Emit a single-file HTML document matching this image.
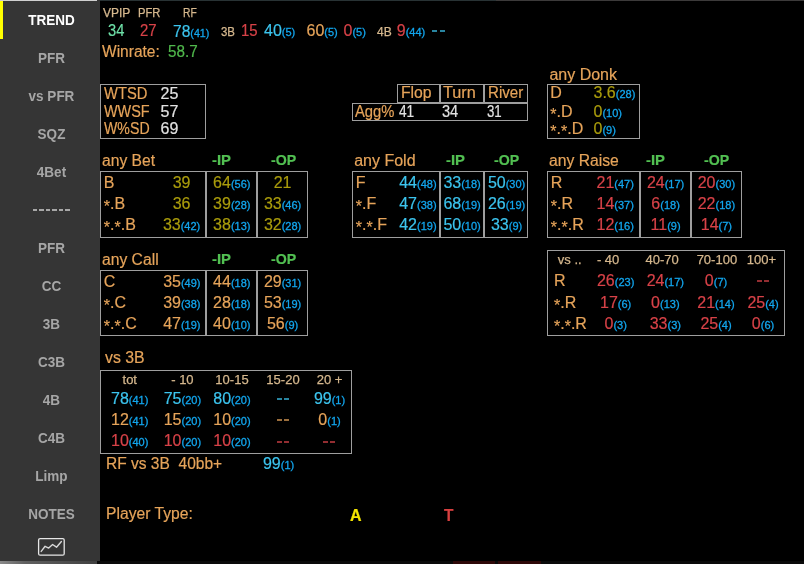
<!DOCTYPE html>
<html><head><meta charset="utf-8"><style>
html,body{margin:0;padding:0;width:804px;height:564px;overflow:hidden;background:#000}
body{position:relative;font-family:"Liberation Sans",sans-serif}
#w{position:absolute;left:0;top:0;width:804px;height:564px;will-change:transform}
.t{position:absolute;white-space:nowrap;line-height:20px;-webkit-text-stroke-width:0.2px}
.b{position:absolute;border:1px solid #9e9e9e}
.sb{position:absolute;left:0;top:0;width:100px;height:561px;background:#353535}
.si{position:absolute;left:0;width:103px;text-align:center;font-weight:bold;font-size:15px;line-height:20px;transform:scaleX(0.9)}
</style></head><body><div id="w">
<div class="sb">
<div style="position:absolute;left:0;top:0;width:97px;height:1px;background:#d0d0d0"></div>
<div style="position:absolute;left:0;top:1px;width:3px;height:38px;background:#ffff00"></div>
<div class="si" style="top:10px;color:#ffffff">TREND</div><div class="si" style="top:48px;color:#a6a6a6">PFR</div><div class="si" style="top:86px;color:#a6a6a6">vs PFR</div><div class="si" style="top:124px;color:#a6a6a6">SQZ</div><div class="si" style="top:162px;color:#a6a6a6">4Bet</div><div style="position:absolute;left:32.90px;top:209px;width:4.5px;height:2px;background:#a8a8a8"></div><div style="position:absolute;left:39.35px;top:209px;width:4.5px;height:2px;background:#a8a8a8"></div><div style="position:absolute;left:45.80px;top:209px;width:4.5px;height:2px;background:#a8a8a8"></div><div style="position:absolute;left:52.25px;top:209px;width:4.5px;height:2px;background:#a8a8a8"></div><div style="position:absolute;left:58.70px;top:209px;width:4.5px;height:2px;background:#a8a8a8"></div><div style="position:absolute;left:65.15px;top:209px;width:4.5px;height:2px;background:#a8a8a8"></div><div class="si" style="top:238px;color:#a6a6a6">PFR</div><div class="si" style="top:276px;color:#a6a6a6">CC</div><div class="si" style="top:314px;color:#a6a6a6">3B</div><div class="si" style="top:352px;color:#a6a6a6">C3B</div><div class="si" style="top:390px;color:#a6a6a6">4B</div><div class="si" style="top:428px;color:#a6a6a6">C4B</div><div class="si" style="top:466px;color:#a6a6a6">Limp</div><div class="si" style="top:504px;color:#a6a6a6">NOTES</div>
<svg style="position:absolute;left:37px;top:537px" width="30" height="20" viewBox="0 0 30 20">
<rect x="1.6" y="1.6" width="25.6" height="16.6" rx="1.5" fill="none" stroke="#e6e6e6" stroke-width="1.3"/>
<polyline points="4.2,14.4 8.1,9.3 11.7,11.1 15.6,7.5 19.5,10.2 24.4,4.5" fill="none" stroke="#d8d8d8" stroke-width="1.4" stroke-linecap="round" stroke-linejoin="round"/>
</svg>
</div>
<div style="position:absolute;left:100px;top:0;width:396px;height:1px;background:#283234"></div><div style="position:absolute;left:496px;top:0;width:308px;height:1px;background:#3c3a3a"></div>
<div style="position:absolute;left:0;top:561px;width:97px;height:3px;background:linear-gradient(90deg,#8a8a8a 0,#606060 25px,#4c4c4c 70px,#404040 97px)"></div>
<div style="position:absolute;left:97px;top:561px;width:707px;height:3px;background:#0a0a0a"></div>
<div style="position:absolute;left:453px;top:561px;width:42px;height:3px;background:#2e0808"></div>
<div style="position:absolute;left:498px;top:561px;width:43px;height:3px;background:#2e0808"></div>
<div class="t" style="left:103.00px;top:2px;-webkit-text-stroke:0.25px #d6b88e"><span style="font-size:12px;color:#d6b88e">VPIP</span></div><div class="t" style="left:137.90px;top:2px;transform:scaleX(0.9333);transform-origin:0 0;-webkit-text-stroke:0.25px #d6b88e"><span style="font-size:12px;color:#d6b88e">PFR</span></div><div class="t" style="left:183.30px;top:2px;transform:scaleX(0.8562);transform-origin:0 0;-webkit-text-stroke:0.25px #d6b88e"><span style="font-size:12px;color:#d6b88e">RF</span></div><div class="t" style="left:108.00px;top:21px;transform:scaleX(0.9167);transform-origin:0 0;"><span style="font-size:16px;color:#6ee0a8">34</span></div><div class="t" style="left:140.40px;top:21px;transform:scaleX(0.9333);transform-origin:0 0;"><span style="font-size:16px;color:#d84248">27</span></div><div class="t" style="left:172.50px;top:22px;transform:scaleX(0.9732);transform-origin:0 0;"><span style="font-size:16px;color:#3cc4ee">78</span><span style="font-size:11px;color:#12a6ee;-webkit-text-stroke:0.3px #12a6ee">(41)</span></div><div class="t" style="left:220.50px;top:21px;transform:scaleX(0.9533);transform-origin:0 0;-webkit-text-stroke:0.25px #d6b88e"><span style="font-size:12px;color:#d6b88e">3B</span></div><div class="t" style="left:241.00px;top:21px;transform:scaleX(0.9333);transform-origin:0 0;"><span style="font-size:16px;color:#d84248">15</span></div><div class="t" style="left:264.00px;top:21px;"><span style="font-size:16px;color:#3cc4ee">40</span><span style="font-size:11px;color:#12a6ee;-webkit-text-stroke:0.3px #12a6ee">(5)</span></div><div class="t" style="left:306.50px;top:21px;"><span style="font-size:16px;color:#e6a45a">60</span><span style="font-size:11px;color:#12a6ee;-webkit-text-stroke:0.3px #12a6ee">(5)</span></div><div class="t" style="left:343.50px;top:21px;"><span style="font-size:16px;color:#d84248">0</span><span style="font-size:11px;color:#12a6ee;-webkit-text-stroke:0.3px #12a6ee">(5)</span></div><div class="t" style="left:377.00px;top:21px;-webkit-text-stroke:0.25px #d6b88e"><span style="font-size:12px;color:#d6b88e">4B</span></div><div class="t" style="left:396.80px;top:21px;"><span style="font-size:16px;color:#d84248">9</span><span style="font-size:11px;color:#12a6ee;-webkit-text-stroke:0.3px #12a6ee">(44)</span></div><div style="position:absolute;left:432.3px;top:30px;width:5px;height:2px;background:#3cc4ee;opacity:0.68"></div><div style="position:absolute;left:439.5px;top:30px;width:5px;height:2px;background:#3cc4ee;opacity:0.68"></div><div class="t" style="left:101.50px;top:42px;transform:scaleX(0.9700);transform-origin:0 0;"><span style="font-size:16px;color:#e6a45a">Winrate:</span></div><div class="t" style="left:167.80px;top:42px;transform:scaleX(0.9516);transform-origin:0 0;"><span style="font-size:16px;color:#50b84c">58.7</span></div><div class="b" style="left:100px;top:84px;width:104px;height:53px;border-color:#9e9e9e"></div><div class="t" style="left:103.50px;top:84px;transform:scaleX(0.9213);transform-origin:0 0;"><span style="font-size:16px;color:#e6a45a">WTSD</span></div><div class="t" style="left:160.50px;top:84px;"><span style="font-size:16px;color:#e2e2e2">25</span></div><div class="t" style="left:103.50px;top:102px;transform:scaleX(0.9020);transform-origin:0 0;"><span style="font-size:16px;color:#e6a45a">WWSF</span></div><div class="t" style="left:160.50px;top:102px;"><span style="font-size:16px;color:#e2e2e2">57</span></div><div class="t" style="left:103.50px;top:119px;transform:scaleX(0.8846);transform-origin:0 0;"><span style="font-size:16px;color:#e6a45a">W%SD</span></div><div class="t" style="left:160.50px;top:119px;"><span style="font-size:16px;color:#e2e2e2">69</span></div><div class="b" style="left:397px;top:84px;width:41px;height:17px;border-color:#9e9e9e"></div><div class="b" style="left:440px;top:84px;width:42px;height:17px;border-color:#9e9e9e"></div><div class="b" style="left:484px;top:84px;width:42px;height:17px;border-color:#9e9e9e"></div><div class="t" style="left:400.50px;top:83px;transform:scaleX(0.9839);transform-origin:0 0;"><span style="font-size:16px;color:#e6a45a">Flop</span></div><div class="t" style="left:442.70px;top:83px;transform:scaleX(1.0156);transform-origin:0 0;"><span style="font-size:16px;color:#e6a45a">Turn</span></div><div class="t" style="left:487.50px;top:83px;transform:scaleX(0.9421);transform-origin:0 0;"><span style="font-size:16px;color:#e6a45a">River</span></div><div class="b" style="left:352px;top:103px;width:174px;height:16px;border-color:#9e9e9e"></div><div class="t" style="left:355.00px;top:102px;transform:scaleX(0.9233);transform-origin:0 0;"><span style="font-size:16px;color:#e6a45a">Agg%</span></div><div class="t" style="left:399.00px;top:102px;transform:scaleX(0.8556);transform-origin:0 0;"><span style="font-size:16px;color:#e2e2e2">41</span></div><div class="t" style="left:442.00px;top:102px;transform:scaleX(0.9111);transform-origin:0 0;"><span style="font-size:16px;color:#e2e2e2">34</span></div><div class="t" style="left:486.70px;top:102px;transform:scaleX(0.8278);transform-origin:0 0;"><span style="font-size:16px;color:#e2e2e2">31</span></div><div class="t" style="left:549.40px;top:65px;"><span style="font-size:16px;color:#e6a45a">any Donk</span></div><div class="b" style="left:547px;top:84px;width:91px;height:53px;border-color:#9e9e9e"></div><div class="t" style="left:550.30px;top:83px;"><span style="font-size:16px;color:#e6a45a">D</span></div><div class="t" style="left:593.50px;top:83px;"><span style="font-size:16px;color:#aa9c0c">3.6</span><span style="font-size:11px;color:#12a6ee;-webkit-text-stroke:0.3px #12a6ee">(28)</span></div><div class="t" style="left:550.30px;top:102px;"><span style="font-size:16px;color:#e6a45a"><span style="position:relative;top:2.5px">*</span>.D</span></div><div class="t" style="left:593.50px;top:102px;"><span style="font-size:16px;color:#aa9c0c">0</span><span style="font-size:11px;color:#12a6ee;-webkit-text-stroke:0.3px #12a6ee">(10)</span></div><div class="t" style="left:550.30px;top:119px;"><span style="font-size:16px;color:#e6a45a"><span style="position:relative;top:2.5px">*</span>.<span style="position:relative;top:2.5px">*</span>.D</span></div><div class="t" style="left:593.50px;top:119px;"><span style="font-size:16px;color:#aa9c0c">0</span><span style="font-size:11px;color:#12a6ee;-webkit-text-stroke:0.3px #12a6ee">(9)</span></div><div class="t" style="left:102.20px;top:151px;transform:scaleX(0.9782);transform-origin:0 0;"><span style="font-size:16px;color:#e6a45a">any Bet</span></div><div class="t" style="left:212.11px;top:150px;transform:scaleX(0.9895);transform-origin:0 0;"><span style="font-size:15px;color:#52c052;font-weight:bold">-IP</span></div><div class="t" style="left:270.60px;top:150px;transform:scaleX(0.9444);transform-origin:0 0;"><span style="font-size:15px;color:#52c052;font-weight:bold">-OP</span></div><div class="b" style="left:100px;top:171px;width:104px;height:65px;border-color:#9e9e9e"></div><div class="b" style="left:206px;top:171px;width:49px;height:65px;border-color:#9e9e9e"></div><div class="b" style="left:257px;top:171px;width:49px;height:65px;border-color:#9e9e9e"></div><div class="t" style="left:103.80px;top:173px;"><span style="font-size:16px;color:#e6a45a">B</span></div><div class="t" style="left:172.69px;top:173px;"><span style="font-size:16px;color:#aa9c0c">39</span></div><div class="t" style="left:213.11px;top:173px;"><span style="font-size:16px;color:#aa9c0c">64</span><span style="font-size:11px;color:#12a6ee;-webkit-text-stroke:0.3px #12a6ee">(56)</span></div><div class="t" style="left:273.69px;top:173px;"><span style="font-size:16px;color:#aa9c0c">21</span></div><div class="t" style="left:103.80px;top:194px;"><span style="font-size:16px;color:#e6a45a"><span style="position:relative;top:2.5px">*</span>.B</span></div><div class="t" style="left:172.69px;top:194px;"><span style="font-size:16px;color:#aa9c0c">36</span></div><div class="t" style="left:213.11px;top:194px;"><span style="font-size:16px;color:#aa9c0c">39</span><span style="font-size:11px;color:#12a6ee;-webkit-text-stroke:0.3px #12a6ee">(28)</span></div><div class="t" style="left:263.91px;top:194px;"><span style="font-size:16px;color:#aa9c0c">33</span><span style="font-size:11px;color:#12a6ee;-webkit-text-stroke:0.3px #12a6ee">(46)</span></div><div class="t" style="left:103.80px;top:215px;"><span style="font-size:16px;color:#e6a45a"><span style="position:relative;top:2.5px">*</span>.<span style="position:relative;top:2.5px">*</span>.B</span></div><div class="t" style="left:162.91px;top:215px;"><span style="font-size:16px;color:#aa9c0c">33</span><span style="font-size:11px;color:#12a6ee;-webkit-text-stroke:0.3px #12a6ee">(42)</span></div><div class="t" style="left:213.11px;top:215px;"><span style="font-size:16px;color:#aa9c0c">38</span><span style="font-size:11px;color:#12a6ee;-webkit-text-stroke:0.3px #12a6ee">(13)</span></div><div class="t" style="left:263.91px;top:215px;"><span style="font-size:16px;color:#aa9c0c">32</span><span style="font-size:11px;color:#12a6ee;-webkit-text-stroke:0.3px #12a6ee">(28)</span></div><div class="t" style="left:354.20px;top:151px;"><span style="font-size:16px;color:#e6a45a">any Fold</span></div><div class="t" style="left:445.71px;top:150px;transform:scaleX(0.9895);transform-origin:0 0;"><span style="font-size:15px;color:#52c052;font-weight:bold">-IP</span></div><div class="t" style="left:493.90px;top:150px;transform:scaleX(0.9444);transform-origin:0 0;"><span style="font-size:15px;color:#52c052;font-weight:bold">-OP</span></div><div class="b" style="left:352px;top:171px;width:86px;height:65px;border-color:#9e9e9e"></div><div class="b" style="left:440px;top:171px;width:42px;height:65px;border-color:#9e9e9e"></div><div class="b" style="left:484px;top:171px;width:42px;height:65px;border-color:#9e9e9e"></div><div class="t" style="left:355.80px;top:173px;"><span style="font-size:16px;color:#e6a45a">F</span></div><div class="t" style="left:399.21px;top:173px;"><span style="font-size:16px;color:#3cc4ee">44</span><span style="font-size:11px;color:#12a6ee;-webkit-text-stroke:0.3px #12a6ee">(48)</span></div><div class="t" style="left:443.41px;top:173px;"><span style="font-size:16px;color:#3cc4ee">33</span><span style="font-size:11px;color:#12a6ee;-webkit-text-stroke:0.3px #12a6ee">(18)</span></div><div class="t" style="left:487.91px;top:173px;"><span style="font-size:16px;color:#3cc4ee">50</span><span style="font-size:11px;color:#12a6ee;-webkit-text-stroke:0.3px #12a6ee">(30)</span></div><div class="t" style="left:355.80px;top:194px;"><span style="font-size:16px;color:#e6a45a"><span style="position:relative;top:2.5px">*</span>.F</span></div><div class="t" style="left:399.21px;top:194px;"><span style="font-size:16px;color:#3cc4ee">47</span><span style="font-size:11px;color:#12a6ee;-webkit-text-stroke:0.3px #12a6ee">(38)</span></div><div class="t" style="left:443.41px;top:194px;"><span style="font-size:16px;color:#3cc4ee">68</span><span style="font-size:11px;color:#12a6ee;-webkit-text-stroke:0.3px #12a6ee">(19)</span></div><div class="t" style="left:487.91px;top:194px;"><span style="font-size:16px;color:#3cc4ee">26</span><span style="font-size:11px;color:#12a6ee;-webkit-text-stroke:0.3px #12a6ee">(19)</span></div><div class="t" style="left:355.80px;top:215px;"><span style="font-size:16px;color:#e6a45a"><span style="position:relative;top:2.5px">*</span>.<span style="position:relative;top:2.5px">*</span>.F</span></div><div class="t" style="left:399.21px;top:215px;"><span style="font-size:16px;color:#3cc4ee">42</span><span style="font-size:11px;color:#12a6ee;-webkit-text-stroke:0.3px #12a6ee">(19)</span></div><div class="t" style="left:443.41px;top:215px;"><span style="font-size:16px;color:#3cc4ee">50</span><span style="font-size:11px;color:#12a6ee;-webkit-text-stroke:0.3px #12a6ee">(10)</span></div><div class="t" style="left:490.98px;top:215px;"><span style="font-size:16px;color:#3cc4ee">33</span><span style="font-size:11px;color:#12a6ee;-webkit-text-stroke:0.3px #12a6ee">(9)</span></div><div class="t" style="left:549.20px;top:151px;transform:scaleX(0.9817);transform-origin:0 0;"><span style="font-size:16px;color:#e6a45a">any Raise</span></div><div class="t" style="left:645.91px;top:150px;transform:scaleX(0.9895);transform-origin:0 0;"><span style="font-size:15px;color:#52c052;font-weight:bold">-IP</span></div><div class="t" style="left:703.90px;top:150px;transform:scaleX(0.9444);transform-origin:0 0;"><span style="font-size:15px;color:#52c052;font-weight:bold">-OP</span></div><div class="b" style="left:547px;top:171px;width:91px;height:65px;border-color:#9e9e9e"></div><div class="b" style="left:640px;top:171px;width:49px;height:65px;border-color:#9e9e9e"></div><div class="b" style="left:691px;top:171px;width:49px;height:65px;border-color:#9e9e9e"></div><div class="t" style="left:550.80px;top:173px;"><span style="font-size:16px;color:#e6a45a">R</span></div><div class="t" style="left:596.51px;top:173px;"><span style="font-size:16px;color:#d84248">21</span><span style="font-size:11px;color:#12a6ee;-webkit-text-stroke:0.3px #12a6ee">(47)</span></div><div class="t" style="left:646.91px;top:173px;"><span style="font-size:16px;color:#d84248">24</span><span style="font-size:11px;color:#12a6ee;-webkit-text-stroke:0.3px #12a6ee">(17)</span></div><div class="t" style="left:697.71px;top:173px;"><span style="font-size:16px;color:#d84248">20</span><span style="font-size:11px;color:#12a6ee;-webkit-text-stroke:0.3px #12a6ee">(30)</span></div><div class="t" style="left:550.80px;top:194px;"><span style="font-size:16px;color:#e6a45a"><span style="position:relative;top:2.5px">*</span>.R</span></div><div class="t" style="left:596.51px;top:194px;"><span style="font-size:16px;color:#d84248">14</span><span style="font-size:11px;color:#12a6ee;-webkit-text-stroke:0.3px #12a6ee">(37)</span></div><div class="t" style="left:651.37px;top:194px;"><span style="font-size:16px;color:#d84248">6</span><span style="font-size:11px;color:#12a6ee;-webkit-text-stroke:0.3px #12a6ee">(18)</span></div><div class="t" style="left:697.71px;top:194px;"><span style="font-size:16px;color:#d84248">22</span><span style="font-size:11px;color:#12a6ee;-webkit-text-stroke:0.3px #12a6ee">(18)</span></div><div class="t" style="left:550.80px;top:215px;"><span style="font-size:16px;color:#e6a45a"><span style="position:relative;top:2.5px">*</span>.<span style="position:relative;top:2.5px">*</span>.R</span></div><div class="t" style="left:596.51px;top:215px;"><span style="font-size:16px;color:#d84248">12</span><span style="font-size:11px;color:#12a6ee;-webkit-text-stroke:0.3px #12a6ee">(16)</span></div><div class="t" style="left:650.57px;top:215px;"><span style="font-size:16px;color:#d84248">11</span><span style="font-size:11px;color:#12a6ee;-webkit-text-stroke:0.3px #12a6ee">(9)</span></div><div class="t" style="left:700.77px;top:215px;"><span style="font-size:16px;color:#d84248">14</span><span style="font-size:11px;color:#12a6ee;-webkit-text-stroke:0.3px #12a6ee">(7)</span></div><div class="t" style="left:102.40px;top:250px;transform:scaleX(0.9793);transform-origin:0 0;"><span style="font-size:16px;color:#e6a45a">any Call</span></div><div class="t" style="left:212.11px;top:249px;transform:scaleX(0.9895);transform-origin:0 0;"><span style="font-size:15px;color:#52c052;font-weight:bold">-IP</span></div><div class="t" style="left:270.60px;top:249px;transform:scaleX(0.9444);transform-origin:0 0;"><span style="font-size:15px;color:#52c052;font-weight:bold">-OP</span></div><div class="b" style="left:100px;top:270px;width:104px;height:64px;border-color:#9e9e9e"></div><div class="b" style="left:206px;top:270px;width:49px;height:64px;border-color:#9e9e9e"></div><div class="b" style="left:257px;top:270px;width:49px;height:64px;border-color:#9e9e9e"></div><div class="t" style="left:103.80px;top:272px;"><span style="font-size:16px;color:#e6a45a">C</span></div><div class="t" style="left:163.16px;top:272px;"><span style="font-size:16px;color:#e6a45a">35</span><span style="font-size:11px;color:#12a6ee;-webkit-text-stroke:0.3px #12a6ee">(49)</span></div><div class="t" style="left:213.11px;top:272px;"><span style="font-size:16px;color:#e6a45a">44</span><span style="font-size:11px;color:#12a6ee;-webkit-text-stroke:0.3px #12a6ee">(18)</span></div><div class="t" style="left:263.91px;top:272px;"><span style="font-size:16px;color:#e6a45a">29</span><span style="font-size:11px;color:#12a6ee;-webkit-text-stroke:0.3px #12a6ee">(31)</span></div><div class="t" style="left:103.80px;top:293px;"><span style="font-size:16px;color:#e6a45a"><span style="position:relative;top:2.5px">*</span>.C</span></div><div class="t" style="left:163.16px;top:293px;"><span style="font-size:16px;color:#e6a45a">39</span><span style="font-size:11px;color:#12a6ee;-webkit-text-stroke:0.3px #12a6ee">(38)</span></div><div class="t" style="left:213.11px;top:293px;"><span style="font-size:16px;color:#e6a45a">28</span><span style="font-size:11px;color:#12a6ee;-webkit-text-stroke:0.3px #12a6ee">(18)</span></div><div class="t" style="left:263.91px;top:293px;"><span style="font-size:16px;color:#e6a45a">53</span><span style="font-size:11px;color:#12a6ee;-webkit-text-stroke:0.3px #12a6ee">(19)</span></div><div class="t" style="left:103.80px;top:314px;"><span style="font-size:16px;color:#e6a45a"><span style="position:relative;top:2.5px">*</span>.<span style="position:relative;top:2.5px">*</span>.C</span></div><div class="t" style="left:163.16px;top:314px;"><span style="font-size:16px;color:#e6a45a">47</span><span style="font-size:11px;color:#12a6ee;-webkit-text-stroke:0.3px #12a6ee">(19)</span></div><div class="t" style="left:213.11px;top:314px;"><span style="font-size:16px;color:#e6a45a">40</span><span style="font-size:11px;color:#12a6ee;-webkit-text-stroke:0.3px #12a6ee">(10)</span></div><div class="t" style="left:266.98px;top:314px;"><span style="font-size:16px;color:#e6a45a">56</span><span style="font-size:11px;color:#12a6ee;-webkit-text-stroke:0.3px #12a6ee">(9)</span></div><div class="b" style="left:547px;top:250px;width:236px;height:84px;border-color:#9e9e9e"></div><div class="t" style="left:557.79px;top:249px;-webkit-text-stroke:0.25px #d6b88e"><span style="font-size:13px;color:#d6b88e">vs ..</span></div><div class="t" style="left:596.90px;top:249px;-webkit-text-stroke:0.25px #d6b88e"><span style="font-size:13px;color:#d6b88e">- 40</span></div><div class="t" style="left:645.57px;top:249px;-webkit-text-stroke:0.25px #d6b88e"><span style="font-size:13px;color:#d6b88e">40-70</span></div><div class="t" style="left:696.65px;top:249px;-webkit-text-stroke:0.25px #d6b88e"><span style="font-size:13px;color:#d6b88e">70-100</span></div><div class="t" style="left:746.75px;top:249px;-webkit-text-stroke:0.25px #d6b88e"><span style="font-size:13px;color:#d6b88e">100+</span></div><div class="t" style="left:554.00px;top:271px;"><span style="font-size:16px;color:#e6a45a">R</span></div><div class="t" style="left:596.96px;top:271px;"><span style="font-size:16px;color:#d84248">26</span><span style="font-size:11px;color:#12a6ee;-webkit-text-stroke:0.3px #12a6ee">(23)</span></div><div class="t" style="left:646.66px;top:271px;"><span style="font-size:16px;color:#d84248">24</span><span style="font-size:11px;color:#12a6ee;-webkit-text-stroke:0.3px #12a6ee">(17)</span></div><div class="t" style="left:704.83px;top:271px;"><span style="font-size:16px;color:#d84248">0</span><span style="font-size:11px;color:#12a6ee;-webkit-text-stroke:0.3px #12a6ee">(7)</span></div><div style="position:absolute;left:756.9px;top:280px;width:5px;height:2px;background:#d84248;opacity:0.68"></div><div style="position:absolute;left:764.1px;top:280px;width:5px;height:2px;background:#d84248;opacity:0.68"></div><div class="t" style="left:554.00px;top:293px;"><span style="font-size:16px;color:#e6a45a"><span style="position:relative;top:2.5px">*</span>.R</span></div><div class="t" style="left:600.02px;top:293px;"><span style="font-size:16px;color:#d84248">17</span><span style="font-size:11px;color:#12a6ee;-webkit-text-stroke:0.3px #12a6ee">(6)</span></div><div class="t" style="left:651.12px;top:293px;"><span style="font-size:16px;color:#d84248">0</span><span style="font-size:11px;color:#12a6ee;-webkit-text-stroke:0.3px #12a6ee">(13)</span></div><div class="t" style="left:697.31px;top:293px;"><span style="font-size:16px;color:#d84248">21</span><span style="font-size:11px;color:#12a6ee;-webkit-text-stroke:0.3px #12a6ee">(14)</span></div><div class="t" style="left:747.38px;top:293px;"><span style="font-size:16px;color:#d84248">25</span><span style="font-size:11px;color:#12a6ee;-webkit-text-stroke:0.3px #12a6ee">(4)</span></div><div class="t" style="left:554.00px;top:314px;"><span style="font-size:16px;color:#e6a45a"><span style="position:relative;top:2.5px">*</span>.<span style="position:relative;top:2.5px">*</span>.R</span></div><div class="t" style="left:604.48px;top:314px;"><span style="font-size:16px;color:#d84248">0</span><span style="font-size:11px;color:#12a6ee;-webkit-text-stroke:0.3px #12a6ee">(3)</span></div><div class="t" style="left:649.73px;top:314px;"><span style="font-size:16px;color:#d84248">33</span><span style="font-size:11px;color:#12a6ee;-webkit-text-stroke:0.3px #12a6ee">(3)</span></div><div class="t" style="left:700.38px;top:314px;"><span style="font-size:16px;color:#d84248">25</span><span style="font-size:11px;color:#12a6ee;-webkit-text-stroke:0.3px #12a6ee">(4)</span></div><div class="t" style="left:751.83px;top:314px;"><span style="font-size:16px;color:#d84248">0</span><span style="font-size:11px;color:#12a6ee;-webkit-text-stroke:0.3px #12a6ee">(6)</span></div><div class="t" style="left:105.20px;top:348px;transform:scaleX(0.9900);transform-origin:0 0;"><span style="font-size:16px;color:#e6a45a">vs 3B</span></div><div class="b" style="left:100px;top:370px;width:250px;height:82px;border-color:#9e9e9e"></div><div class="t" style="left:122.52px;top:369px;-webkit-text-stroke:0.25px #d6b88e"><span style="font-size:13px;color:#d6b88e">tot</span></div><div class="t" style="left:171.20px;top:369px;-webkit-text-stroke:0.25px #d6b88e"><span style="font-size:13px;color:#d6b88e">- 10</span></div><div class="t" style="left:215.37px;top:369px;-webkit-text-stroke:0.25px #d6b88e"><span style="font-size:13px;color:#d6b88e">10-15</span></div><div class="t" style="left:266.37px;top:369px;-webkit-text-stroke:0.25px #d6b88e"><span style="font-size:13px;color:#d6b88e">15-20</span></div><div class="t" style="left:316.66px;top:369px;-webkit-text-stroke:0.25px #d6b88e"><span style="font-size:13px;color:#d6b88e">20 +</span></div><div class="t" style="left:111.06px;top:389px;"><span style="font-size:16px;color:#3cc4ee">78</span><span style="font-size:11px;color:#12a6ee;-webkit-text-stroke:0.3px #12a6ee">(41)</span></div><div class="t" style="left:163.71px;top:389px;"><span style="font-size:16px;color:#3cc4ee">75</span><span style="font-size:11px;color:#12a6ee;-webkit-text-stroke:0.3px #12a6ee">(20)</span></div><div class="t" style="left:213.31px;top:389px;"><span style="font-size:16px;color:#3cc4ee">80</span><span style="font-size:11px;color:#12a6ee;-webkit-text-stroke:0.3px #12a6ee">(20)</span></div><div style="position:absolute;left:276.9px;top:398px;width:5px;height:2px;background:#3cc4ee;opacity:0.68"></div><div style="position:absolute;left:284.1px;top:398px;width:5px;height:2px;background:#3cc4ee;opacity:0.68"></div><div class="t" style="left:313.88px;top:389px;"><span style="font-size:16px;color:#3cc4ee">99</span><span style="font-size:11px;color:#12a6ee;-webkit-text-stroke:0.3px #12a6ee">(1)</span></div><div class="t" style="left:111.06px;top:410px;"><span style="font-size:16px;color:#e6a45a">12</span><span style="font-size:11px;color:#12a6ee;-webkit-text-stroke:0.3px #12a6ee">(41)</span></div><div class="t" style="left:163.71px;top:410px;"><span style="font-size:16px;color:#e6a45a">15</span><span style="font-size:11px;color:#12a6ee;-webkit-text-stroke:0.3px #12a6ee">(20)</span></div><div class="t" style="left:213.31px;top:410px;"><span style="font-size:16px;color:#e6a45a">10</span><span style="font-size:11px;color:#12a6ee;-webkit-text-stroke:0.3px #12a6ee">(20)</span></div><div style="position:absolute;left:276.9px;top:419px;width:5px;height:2px;background:#e6a45a;opacity:0.68"></div><div style="position:absolute;left:284.1px;top:419px;width:5px;height:2px;background:#e6a45a;opacity:0.68"></div><div class="t" style="left:318.33px;top:410px;"><span style="font-size:16px;color:#e6a45a">0</span><span style="font-size:11px;color:#12a6ee;-webkit-text-stroke:0.3px #12a6ee">(1)</span></div><div class="t" style="left:111.06px;top:431px;"><span style="font-size:16px;color:#d84248">10</span><span style="font-size:11px;color:#12a6ee;-webkit-text-stroke:0.3px #12a6ee">(40)</span></div><div class="t" style="left:163.71px;top:431px;"><span style="font-size:16px;color:#d84248">10</span><span style="font-size:11px;color:#12a6ee;-webkit-text-stroke:0.3px #12a6ee">(20)</span></div><div class="t" style="left:213.31px;top:431px;"><span style="font-size:16px;color:#d84248">10</span><span style="font-size:11px;color:#12a6ee;-webkit-text-stroke:0.3px #12a6ee">(20)</span></div><div style="position:absolute;left:276.9px;top:441px;width:5px;height:2px;background:#d84248;opacity:0.68"></div><div style="position:absolute;left:284.1px;top:441px;width:5px;height:2px;background:#d84248;opacity:0.68"></div><div style="position:absolute;left:323.0px;top:441px;width:5px;height:2px;background:#d84248;opacity:0.68"></div><div style="position:absolute;left:330.2px;top:441px;width:5px;height:2px;background:#d84248;opacity:0.68"></div><div class="t" style="left:105.70px;top:454px;transform:scaleX(0.9708);transform-origin:0 0;white-space:pre"><span style="font-size:16px;color:#e6a45a">RF vs 3B  40bb+</span></div><div class="t" style="left:262.98px;top:454px;"><span style="font-size:16px;color:#3cc4ee">99</span><span style="font-size:11px;color:#12a6ee;-webkit-text-stroke:0.3px #12a6ee">(1)</span></div><div class="t" style="left:105.70px;top:504px;transform:scaleX(0.9787);transform-origin:0 0;"><span style="font-size:16px;color:#e6a45a">Player Type:</span></div><div class="t" style="left:350.00px;top:506px;transform:scaleX(0.9417);transform-origin:0 0;"><span style="font-size:17px;color:#f4e400;font-weight:bold">A</span></div><div class="t" style="left:443.90px;top:506px;transform:scaleX(0.9091);transform-origin:0 0;"><span style="font-size:17px;color:#d84040;font-weight:bold">T</span></div>
</div></body></html>
